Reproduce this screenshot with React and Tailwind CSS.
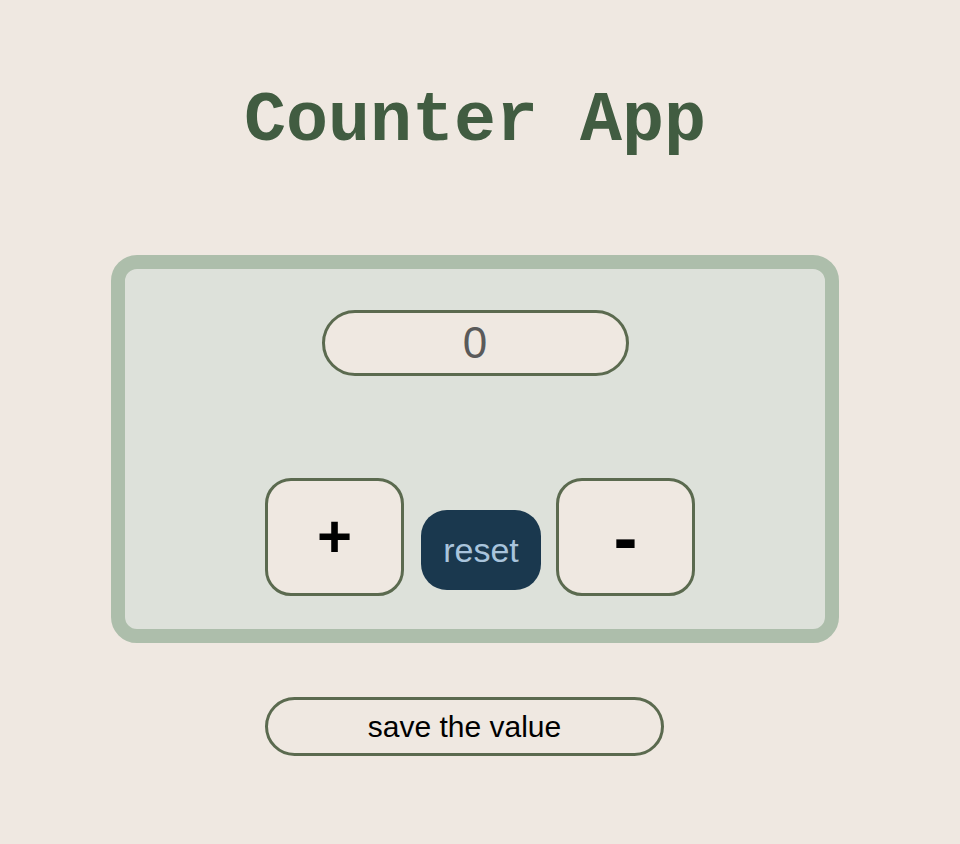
import { useState } from "react";

export default function App() {
  const [count, setCount] = useState(0);

  return (
    <div className="min-h-[844px] w-full bg-[#efe8e1]">
      <div className="w-[950px] flex flex-col items-center">
        {/* titre */}
        <h1 className="mt-[87px] h-[70px] leading-[70px] text-[70px] font-bold font-['Liberation_Mono','Courier_New',monospace] text-[#415c41]">
          Counter App
        </h1>

        {/* carte */}
        <div className="mt-[98px] w-[728px] h-[388px] border-[14px] border-[#adbeab] bg-[#dde1da] rounded-[26px] flex flex-col items-center">
          <div className="mt-[41px] w-[307px] h-[66px] border-[3px] border-[#5b6a4f] rounded-full bg-[#efe8e1] flex items-center justify-center text-[44px] text-[#5a5a5a] font-['Liberation_Sans',Arial,sans-serif]">
            {count}
          </div>

          <div className="mt-[102px] pl-[10px] flex items-start">
            <button
              onClick={() => setCount((c) => c + 1)}
              className="w-[139px] h-[118px] border-[3px] border-[#5b6a4f] rounded-[26px] bg-[#efe8e1] flex items-center justify-center text-[60px] font-bold text-black font-['Liberation_Sans',Arial,sans-serif]"
            >
              +
            </button>
            <button
              onClick={() => setCount(0)}
              className="ml-[17px] mt-[32px] w-[120px] h-[80px] rounded-[26px] bg-[#1a384e] flex items-center justify-center text-[34px] text-[#a9c4dc] font-['Liberation_Sans',Arial,sans-serif]"
            >
              reset
            </button>
            <button
              onClick={() => setCount((c) => c - 1)}
              className="ml-[15px] w-[139px] h-[118px] border-[3px] border-[#5b6a4f] rounded-[26px] bg-[#efe8e1] flex items-center justify-center text-[72px] font-bold text-black font-['Liberation_Sans',Arial,sans-serif]"
            >
              -
            </button>
          </div>
        </div>

        {/* sauvegarde */}
        <button className="mt-[54px] mr-[21px] w-[399px] h-[59px] border-[3px] border-[#5b6a4f] rounded-full bg-[#efe8e1] flex items-center justify-center text-[30px] text-black font-['Liberation_Sans',Arial,sans-serif]">
          save the value
        </button>
      </div>
    </div>
  );
}
